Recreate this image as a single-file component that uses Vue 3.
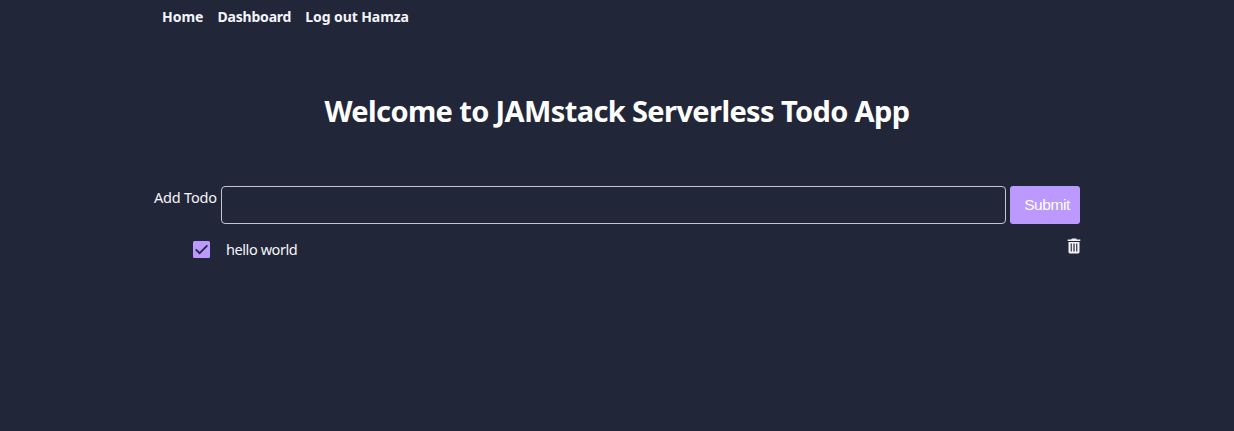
<script setup>
import { ref } from 'vue'

const links = ['Home', 'Dashboard', 'Log out Hamza']
const draft = ref('')
const todos = ref([{ id: 1, text: 'hello world', done: true }])
</script>

<template>
  <div class="page">
    <nav class="nav">
      <a v-for="link in links" :key="link" :class="['link', link.split(' ')[0].toLowerCase()]">{{ link }}</a>
    </nav>
    <h1 class="title">Welcome to JAMstack Serverless Todo App</h1>
    <form class="form" @submit.prevent>
      <label class="label" for="todo">Add Todo</label>
      <input id="todo" v-model="draft" class="input" autocomplete="off" />
      <button class="submit">Submit</button>
    </form>
    <ul class="list">
      <li v-for="todo in todos" :key="todo.id" class="item">
        <svg class="check" viewBox="0 0 17 17">
          <rect width="17" height="17" rx="1.5" fill="#bb99ff" />
          <path v-if="todo.done" d="M2.7 8.3 L6.6 12.2 L14.4 4.4" fill="none" stroke="#2b2748" stroke-width="1.9" />
        </svg>
        <span class="text">{{ todo.text }}</span>
        <svg class="trash" viewBox="0 0 14 16">
          <path fill="#f0f1f5" fill-rule="evenodd" d="M4.8 0.6H9.2L9.8 1.4H13.3V3H0.7V1.4H4.2ZM1.5 4H12.5V14A1.4 1.4 0 0 1 11.1 15.4H2.9A1.4 1.4 0 0 1 1.5 14ZM3.7 5.5V13.5H4.8V5.5ZM6.4 5.5V13.5H7.6V5.5ZM9.2 5.5V13.5H10.3V5.5Z" />
        </svg>
      </li>
    </ul>
  </div>
</template>

<style>
body {
  background: #222639;
}
</style>

<style scoped>
.page {
  box-sizing: border-box;
  width: 926px;
  height: 431px;
  margin: 0 auto;
  color: #f4f5fa;
  font: 14.5px/22px "Noto Sans", "Open Sans", sans-serif;
}
.nav {
  display: flex;
  gap: 14px;
  padding: 6px 8px 0;
  height: 34px;
  box-sizing: border-box;
}
.link {
  font-weight: 700;
  font-size: 14px;
  white-space: nowrap;
}
.dashboard {
  letter-spacing: -0.2px;
}
.log {
  letter-spacing: -0.08px;
}
.title {
  margin: 57px 0 0;
  color: #fff;
  font-size: 29px;
  font-weight: 700;
  line-height: 40px;
  letter-spacing: -0.62px;
  text-align: center;
  white-space: nowrap;
}
.form {
  display: flex;
  align-items: flex-start;
  margin-top: 55px;
}
.label {
  width: 66.5px;
  letter-spacing: -0.2px;
  white-space: nowrap;
}
.input {
  box-sizing: border-box;
  flex: 1;
  min-width: 0;
  height: 38px;
  margin-right: 4px;
  padding: 0 8px;
  border: 1px solid #c3c5d2;
  border-radius: 4px;
  outline: 0;
  background: transparent;
  color: #fff;
}
.submit {
  box-sizing: border-box;
  width: 70px;
  height: 38px;
  padding: 0 0 0 4px;
  border: 0;
  border-radius: 3px;
  background: #bb99ff;
  color: #fff;
  font: 15.5px "Liberation Sans", Arial, sans-serif;
  letter-spacing: -0.45px;
}
.list {
  margin: 14px 0 0;
  padding: 0;
  list-style: none;
}
.item {
  display: flex;
  align-items: flex-start;
  padding-left: 39px;
}
.check {
  width: 17px;
  height: 17px;
  margin-top: 3px;
}
.text {
  margin: 0 auto 0 16px;
  letter-spacing: -0.42px;
}
.trash {
  width: 14px;
  height: 16px;
  margin-right: -1px;
}
</style>
